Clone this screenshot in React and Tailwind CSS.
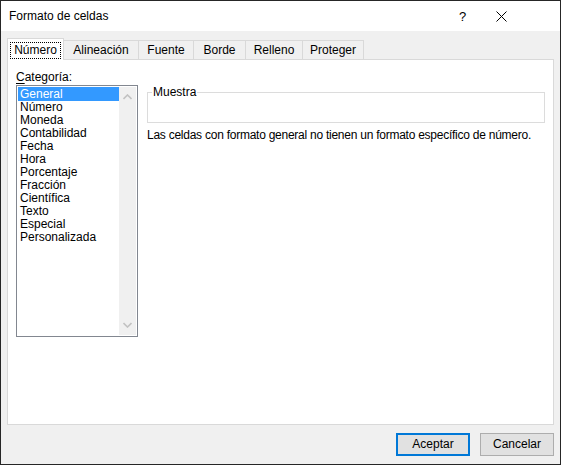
import React from 'react';

const TABS = [
  { label: 'Número', w: 'w-[57px]' },
  { label: 'Alineación', w: 'w-[76px]' },
  { label: 'Fuente', w: 'w-[56px]' },
  { label: 'Borde', w: 'w-[53px]' },
  { label: 'Relleno', w: 'w-[58px]' },
  { label: 'Proteger', w: 'w-[62px]' },
];

const CATEGORIES = [
  'General', 'Número', 'Moneda', 'Contabilidad', 'Fecha', 'Hora',
  'Porcentaje', 'Fracción', 'Científica', 'Texto', 'Especial', 'Personalizada',
];

function Chevron({ down }) {
  return (
    <svg width="9" height="6" viewBox="0 0 9 6" className="block">
      <path
        d={down ? 'M0.5 1 L4.5 5 L8.5 1' : 'M0.5 5 L4.5 1 L8.5 5'}
        fill="none"
        stroke="#c2c2c2"
        strokeWidth="1.6"
      />
    </svg>
  );
}

export default function App() {
  return (
    <div
      className="w-[561px] h-[465px] flex flex-col border border-[#262626] bg-[#f0f0f0] text-[12px] leading-[13px] text-black"
      style={{ fontFamily: '"Liberation Sans", Arial, sans-serif' }}
    >
      {/* Title bar */}
      <div className="h-[30px] shrink-0 bg-white flex items-center pl-[8px]">
        <span className="flex-1">Formato de celdas</span>
        <span className="text-[13px] w-[8px] mr-[29px]">?</span>
        <svg width="11" height="11" viewBox="0 0 11 11" className="mr-[53px]">
          <path d="M0.5 0.5 L10.5 10.5 M10.5 0.5 L0.5 10.5" stroke="#000" strokeWidth="1" />
        </svg>
      </div>

      {/* Body */}
      <div className="flex-1 flex flex-col pt-[7px] px-[6px]">
        {/* Tabs */}
        <div className="h-[22px] -mb-px relative z-10 flex items-end">
          {TABS.map((t, i) =>
            i === 0 ? (
              <div
                key={t.label}
                className={`${t.w} h-[22px] bg-white border-l border-r border-t border-[#d9d9d9] flex items-start justify-center pt-[3px]`}
              >
                <span className="border border-dotted border-black px-[3px] py-px">{t.label}</span>
              </div>
            ) : (
              <div
                key={t.label}
                className={`${t.w} h-[20px] -ml-px border border-[#d9d9d9] bg-[#f0f0f0] flex items-center justify-center`}
              >
                {t.label}
              </div>
            )
          )}
        </div>

        {/* Panel */}
        <div className="h-[366px] bg-white border border-[#d9d9d9] flex px-[8px]">
          {/* Left column */}
          <div className="flex flex-col pt-[11px]">
            <div>
              <span className="underline underline-offset-2">C</span>ategoría:
            </div>
            <div className="mt-[1px] w-[122px] h-[252px] border border-[#828790] flex p-px">
              <div className="flex-1 flex flex-col">
                {CATEGORIES.map((c, i) => (
                  <div
                    key={c}
                    className={`pl-[2px] ${i === 0 ? 'bg-[#3399ff] text-white h-[14px] pt-px' : 'h-[13px]'}`}
                  >
                    {c}
                  </div>
                ))}
              </div>
              <div className="w-[17px] bg-[#f0f0f0] flex flex-col items-center justify-between py-[7px]">
                <Chevron />
                <Chevron down />
              </div>
            </div>
          </div>

          {/* Right column */}
          <div className="flex-1 ml-[9px] pt-[32px] flex flex-col">
            <div className="relative h-[31px] border border-[#dcdcdc]">
              <span className="absolute -top-[7px] left-[4px] bg-white px-px">Muestra</span>
            </div>
            <div className="mt-[6px] whitespace-nowrap tracking-[-0.25px]">
              Las celdas con formato general no tienen un formato específico de número.
            </div>
          </div>
        </div>

        {/* Footer */}
        <div className="flex justify-end gap-[10px] pt-[8px]">
          <button className="w-[74px] h-[23px] bg-[#e1e1e1] border-2 border-[#0078d7] flex items-center justify-center">
            Aceptar
          </button>
          <button className="w-[74px] h-[23px] bg-[#e1e1e1] border border-[#adadad] flex items-center justify-center">
            Cancelar
          </button>
        </div>
      </div>
    </div>
  );
}
